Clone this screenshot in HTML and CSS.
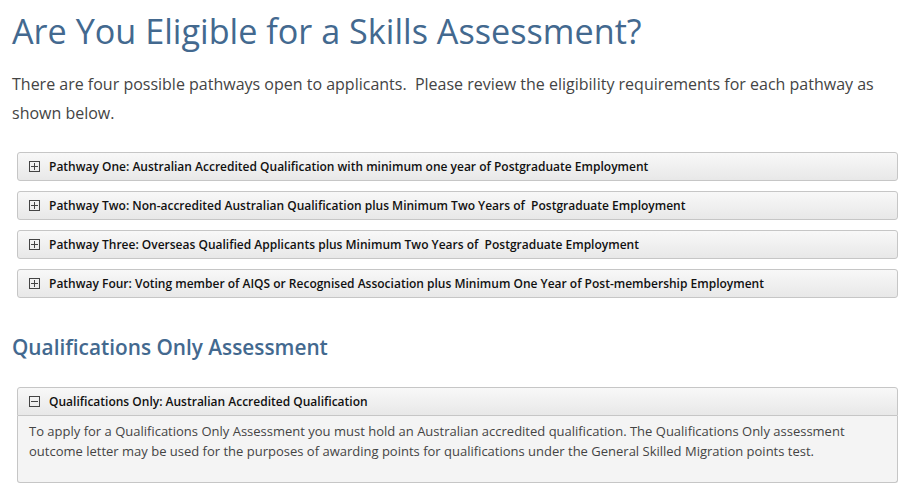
FILE: index.html
```html
<!DOCTYPE html>
<html>
<head>
<meta charset="utf-8">
<link rel="stylesheet" href="styles.css">
</head>
<body>
<div class="page">
  <h1 class="title">Are You Eligible for a Skills Assessment?</h1>
  <p class="intro">There are four possible pathways open to applicants.&nbsp; Please review the eligibility requirements for each pathway as shown below.</p>

  <div class="accordion">
    <div class="acc-header"><span class="icon plus"></span><span>Pathway One: Australian Accredited Qualification with minimum one year of Postgraduate Employment</span></div>
    <div class="acc-header"><span class="icon plus"></span><span>Pathway Two: Non-accredited Australian Qualification plus Minimum Two Years of&nbsp; Postgraduate Employment</span></div>
    <div class="acc-header"><span class="icon plus"></span><span>Pathway Three: Overseas Qualified Applicants plus Minimum Two Years of&nbsp; Postgraduate Employment</span></div>
    <div class="acc-header"><span class="icon plus"></span><span>Pathway Four: Voting member of AIQS or Recognised Association plus Minimum One Year of Post-membership Employment</span></div>
  </div>

  <h2 class="subtitle">Qualifications Only Assessment</h2>

  <div class="accordion">
    <div class="acc-item">
      <div class="acc-header open"><span class="icon minus"></span><span>Qualifications Only: Australian Accredited Qualification</span></div>
      <div class="acc-content">
        <p>To apply for a Qualifications Only Assessment you must hold an Australian accredited qualification. The Qualifications Only assessment outcome letter may be used for the purposes of awarding points for qualifications under the General Skilled Migration points test.</p>
      </div>
    </div>
  </div>
</div>
</body>
</html>
```

FILE: styles.css
```css
* { box-sizing: border-box; }
html, body { margin: 0; padding: 0; background: #fff; }
body {
  font-family: "Open Sans", "DejaVu Sans", sans-serif;
  color: #444;
}
.page {
  padding: 0 20px 0 12px;
}
.title {
  margin: 0;
  padding-top: 7px;
  font-size: 34.2px;
  line-height: 48px;
  font-weight: 400;
  color: #43698f;
}
.intro {
  margin: 15px 0 24px;
  font-size: 16px;
  line-height: 29px;
  color: #444;
}
.accordion {
  margin-left: 5px;
  display: flex;
  flex-direction: column;
  gap: 10px;
}
.acc-header {
  display: flex;
  align-items: center;
  height: 29px;
  padding: 0 11px;
  border: 1px solid #c6c6c6;
  border-radius: 3px;
  background: linear-gradient(#f8f8f8, #e8e8e8);
  font-size: 12px;
  font-weight: 600;
  color: #111;
  gap: 9px;
}
.icon {
  width: 11px;
  height: 11px;
  border: 1px solid #444;
  position: relative;
  flex: none;
}
.icon::before, .icon.plus::after {
  content: "";
  position: absolute;
  background: #444;
}
.icon::before {
  left: 1px; right: 1px; top: 4px; height: 1px;
}
.icon.plus::after {
  top: 1px; bottom: 1px; left: 4px; width: 1px;
}
.subtitle {
  margin: 35px 0 26px;
  font-size: 20.8px;
  line-height: 28px;
  font-weight: 600;
  color: #43698f;
}
.acc-header.open {
  border-radius: 3px 3px 0 0;
}
.acc-content {
  border: 1px solid #c6c6c6;
  border-top: 0;
  border-radius: 0 0 3px 3px;
  background: #f4f4f4;
  padding: 5px 11px 21px;
  font-size: 13px;
  line-height: 20px;
  color: #444;
}
.acc-content p { margin: 0; }
```
